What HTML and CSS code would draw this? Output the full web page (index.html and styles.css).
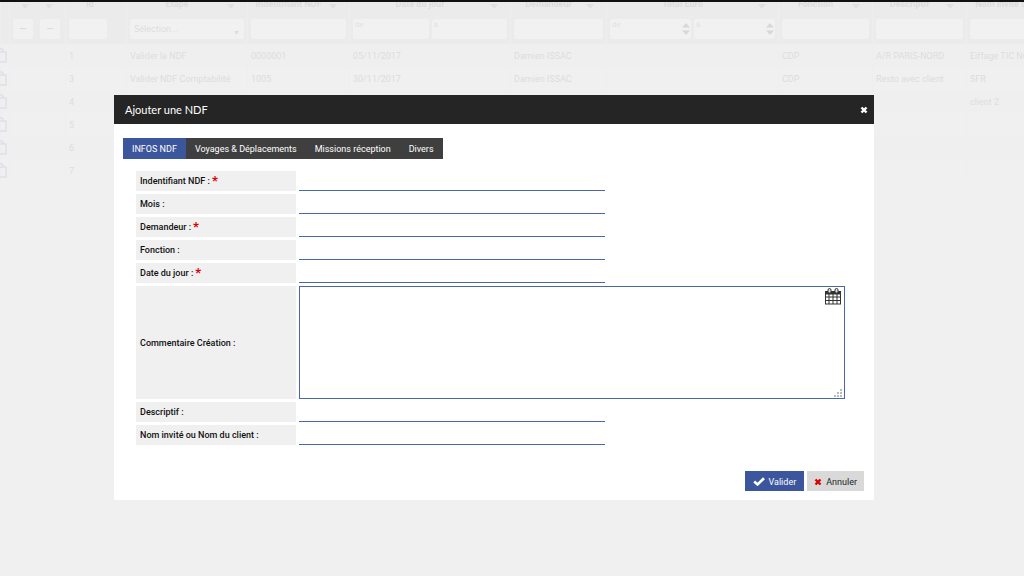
FILE: index.html
```html
<!DOCTYPE html>
<html lang="fr">
<head>
  <meta charset="UTF-8">
  <meta name="viewport" content="width=device-width, initial-scale=1.0">
  <title>Ajouter une NDF</title>
  <link rel="stylesheet" href="styles.css">
</head>
<body>
  <svg class="sprite" aria-hidden="true">
    <symbol id="copy" viewBox="0 0 14 15">
      <path d="M1 4h12v10H1zM3 4V1h6l2 3" fill="none" stroke="currentColor" stroke-width="1.5" />
    </symbol>
    <symbol id="sort" viewBox="0 0 8 6">
      <path d="M0 1h8L4 6z" fill="currentColor" />
    </symbol>
    <symbol id="spin" viewBox="0 0 8 12">
      <path d="M0 4.5L4 0l4 4.5zM0 7.5h8L4 12z" fill="currentColor" />
    </symbol>
    <symbol id="cross" viewBox="0 0 8 8">
      <path d="M1.5 1.5l5 5M6.5 1.5l-5 5" fill="none" stroke="currentColor" stroke-width="2.4" />
    </symbol>
  </svg>

  <div class="topbar"></div>

  <!-- Liste des notes de frais -->
  <main class="page">
    <table class="list">
      <colgroup>
        <col class="col-copy"><col class="col-tools"><col class="col-id"><col class="col-step"><col class="col-ndf"><col class="col-date">
        <col class="col-user"><col class="col-total"><col class="col-job"><col class="col-desc"><col>
      </colgroup>
      <thead>
        <tr class="titles">
          <th></th>
          <th><svg class="sort"><use href="#sort" /></svg><svg class="sort left"><use href="#sort" /></svg></th>
          <th>Id</th>
          <th><svg class="sort"><use href="#sort" /></svg>Étape</th>
          <th><svg class="sort"><use href="#sort" /></svg>Indentifiant NDF</th>
          <th><svg class="sort"><use href="#sort" /></svg>Date du jour</th>
          <th><svg class="sort"><use href="#sort" /></svg>Demandeur</th>
          <th><svg class="sort"><use href="#sort" /></svg>Total Euro</th>
          <th><svg class="sort"><use href="#sort" /></svg>Fonction</th>
          <th><svg class="sort"><use href="#sort" /></svg>Descriptif</th>
          <th>Nom invité ou Nom du client</th>
        </tr>
        <tr class="filters">
          <td></td>
          <td><div class="pair tools"><button type="button" aria-label="Actions">—</button><button type="button" aria-label="Options">—</button></div></td>
          <td><input class="short" type="text" aria-label="Id"></td>
          <td><div class="pick"><select aria-label="Étape"><option>Sélection...</option></select></div></td>
          <td><input type="text" aria-label="Indentifiant NDF"></td>
          <td><div class="pair"><input type="text" placeholder="de" aria-label="Date de"><input type="text" placeholder="à" aria-label="Date à"></div></td>
          <td><input type="text" aria-label="Demandeur"></td>
          <td>
            <div class="pair">
              <div class="number"><input type="text" placeholder="de" aria-label="Total de"><svg><use href="#spin" /></svg></div>
              <div class="number"><input type="text" placeholder="à" aria-label="Total à"><svg><use href="#spin" /></svg></div>
            </div>
          </td>
          <td><input type="text" aria-label="Fonction"></td>
          <td><input type="text" aria-label="Descriptif"></td>
          <td><input type="text" aria-label="Client"></td>
        </tr>
      </thead>
      <tbody>
        <tr><td><svg class="copy"><use href="#copy" /></svg></td><td></td><td>1</td><td>Valider la NDF</td><td>0000001</td><td>05/11/2017</td><td>Damien ISSAC</td><td></td><td>CDP</td><td>A/R PARIS-NORD</td><td>Eiffage TIC NORD</td></tr>
        <tr><td><svg class="copy"><use href="#copy" /></svg></td><td></td><td>3</td><td>Valider NDF Comptabilité</td><td>1005</td><td>30/11/2017</td><td>Damien ISSAC</td><td></td><td>CDP</td><td>Resto avec client</td><td>SFR</td></tr>
        <tr><td><svg class="copy"><use href="#copy" /></svg></td><td></td><td>4</td><td></td><td></td><td></td><td></td><td></td><td></td><td></td><td>client 2</td></tr>
        <tr><td><svg class="copy"><use href="#copy" /></svg></td><td></td><td>5</td><td></td><td></td><td></td><td></td><td></td><td></td><td></td><td></td></tr>
        <tr><td><svg class="copy"><use href="#copy" /></svg></td><td></td><td>6</td><td></td><td></td><td></td><td></td><td></td><td></td><td></td><td></td></tr>
        <tr><td><svg class="copy"><use href="#copy" /></svg></td><td></td><td>7</td><td></td><td></td><td></td><td></td><td></td><td></td><td></td><td></td></tr>
      </tbody>
    </table>
  </main>

  <!-- Fenêtre d'ajout -->
  <div class="overlay">
    <form class="modal" role="dialog" aria-labelledby="modalTitle">
      <header class="modal-header">
        <h1 id="modalTitle">Ajouter une NDF</h1>
        <button class="close" type="button" aria-label="Fermer"><svg><use href="#cross" /></svg></button>
      </header>

      <nav class="tabs">
        <a class="active" href="#infos">INFOS NDF</a>
        <a href="#voyages">Voyages &amp; Déplacements</a>
        <a href="#missions">Missions réception</a>
        <a href="#divers">Divers</a>
      </nav>

      <div class="fields" id="infos">
        <label for="ident">Indentifiant NDF : <b>*</b></label>
        <input type="text" id="ident">
        <label for="mois">Mois :</label>
        <input type="text" id="mois">
        <label for="demandeur">Demandeur : <b>*</b></label>
        <input type="text" id="demandeur">
        <label for="fonction">Fonction :</label>
        <input type="text" id="fonction">
        <label for="date">Date du jour : <b>*</b></label>
        <input type="text" id="date">
        <label for="comment">Commentaire Création :</label>
        <div class="comment">
          <textarea id="comment"></textarea>
          <svg class="calendar" viewBox="0 0 16 17">
            <path d="M0 3h16v13.500H0z" fill="#333" />
            <path d="M1 6.500h2.500v2H1zM4.500 6.500h3v2h-3zM8.500 6.500h3v2h-3zM12.500 6.500H15v2h-2.500zM1 9.500h2.500v2.500H1zM4.500 9.500h3V12h-3zM8.500 9.500h3V12h-3zM12.500 9.500H15V12h-2.500zM1 13h2.500v2.500H1zM4.500 13h3v2.500h-3zM8.500 13h3v2.500h-3zM12.500 13H15v2.500h-2.500z" fill="#fff" />
            <rect x="3" y=".5" width="3" height="4.500" rx="1.500" fill="#ddd" stroke="#333" />
            <rect x="10" y=".5" width="3" height="4.500" rx="1.500" fill="#ddd" stroke="#333" />
          </svg>
          <svg class="grip" viewBox="0 0 9 9">
            <path d="M6 0h2v2H6zM3 3h2v2H3zM6 3h2v2H6zM0 6h2v2H0zM3 6h2v2H3zM6 6h2v2H6z" fill="#bbb" />
          </svg>
        </div>
        <label for="descriptif">Descriptif :</label>
        <input type="text" id="descriptif">
        <label for="client">Nom invité ou Nom du client :</label>
        <input type="text" id="client">
      </div>

      <footer class="actions">
        <button class="submit" type="submit">
          <svg viewBox="0 0 12 9"><path d="M1.200 4.500l3.300 3L11 1.200" fill="none" stroke="currentColor" stroke-width="2.600" /></svg>
          Valider
        </button>
        <button class="cancel" type="button"><svg><use href="#cross" /></svg> Annuler</button>
      </footer>
    </form>
  </div>
</body>
</html>
```
FILE: styles.css
```css
* {
  box-sizing: border-box;
}
body {
  margin: 0;
  min-height: 100vh;
  background: #efefef;
  font-family: Roboto, "Liberation Sans", sans-serif;
  font-size: 9px;
  color: #222;
}
input, select, textarea, button {
  font: inherit;
  color: inherit;
  border: 0;
  margin: 0;
  padding: 0;
  border-radius: 0;
}
.sprite {
  display: none;
}
.topbar {
  position: fixed;
  top: 0;
  left: 0;
  right: 0;
  height: 2px;
  background: #111;
  z-index: 3;
}

/* Liste */
.page {
  overflow: hidden;
}
.list {
  width: 100%;
  min-width: 1110px;
  margin-top: -12px;
  table-layout: fixed;
  border-collapse: collapse;
}
.col-copy { width: 9px; }
.col-tools { width: 56px; }
.col-id { width: 61px; }
.col-step { width: 121px; }
.col-ndf { width: 102px; }
.col-date { width: 161px; }
.col-user { width: 96px; }
.col-total { width: 172px; }
.col-job { width: 94px; }
.col-desc { width: 94px; }
.list th, .list td {
  height: 23px;
  padding: 0 3px;
  text-align: left;
  white-space: nowrap;
  border-left: 1px solid #ddd;
}
.list .titles th {
  height: 25px;
  padding: 0 12px 0 0;
  line-height: 11px;
  text-align: center;
  vertical-align: middle;
  padding-top: 7px;
}
.list .filters td {
  height: 31px;
  padding: 0 3px;
}
.list thead {
  background: #c4c4c4;
}
.list tbody tr:nth-child(odd) {
  background: #e8e8e8;
}
.list td:first-child {
  padding: 0;
}
.sort {
  float: right;
  width: 8px;
  height: 6px;
  margin-top: 4px;
  color: #3c569e;
}
.sort.left {
  margin-right: 16px;
}
.copy {
  display: block;
  width: 14px;
  height: 15px;
  margin-left: -8px;
  color: #3c569e;
}
.filters input, .filters select, .filters button {
  display: block;
  width: 100%;
  height: 20px;
  padding: 0 4px;
  background: #fff;
  border-radius: 3px;
}
.filters .short {
  width: 38px;
}
.filters ::placeholder {
  font-size: 8px;
  color: #555;
}
.filters .pair input {
  padding: 0 2px 9px;
}
.pair {
  display: flex;
  gap: 3px;
}
.pair.tools {
  gap: 7px;
}
.filters .tools button {
  width: 20px;
  font-weight: bold;
}
.pick, .number {
  position: relative;
  flex: 1;
}
.pick select {
  appearance: none;
}
.pick::after {
  content: "▼";
  position: absolute;
  right: 4px;
  bottom: 2px;
  font-size: 7px;
}
.number svg {
  position: absolute;
  top: 4px;
  right: 1px;
  width: 8px;
  height: 12px;
  color: #000;
}

/* Fenêtre */
.overlay {
  position: fixed;
  inset: 0;
  padding: 95px 150px 0 114px;
  background: rgba(239, 239, 239, 0.9);
  z-index: 2;
}
.modal {
  background: #fff;
  padding-bottom: 9px;
}
.modal-header {
  display: flex;
  justify-content: space-between;
  align-items: center;
  height: 29px;
  padding: 0 6px 0 11px;
  background: #252525;
  color: #fff;
}
.modal-header h1 {
  margin: 0;
  font-family: Lato, sans-serif;
  font-size: 11px;
  font-weight: normal;
}
.close {
  background: none;
}
.close svg, .cancel svg {
  display: block;
  width: 8px;
  height: 8px;
}
.tabs {
  display: flex;
  width: fit-content;
  margin: 14px 0 12px 9px;
  background: #3f3f3f;
}
.tabs a {
  padding: 1px 9px 0;
  line-height: 20px;
  color: #fff;
  text-decoration: none;
}
.tabs .active {
  background: #3c569e;
}
.fields {
  display: grid;
  grid-template-columns: 160px 1fr;
  gap: 3px;
  margin: 0 29px 0 22px;
}
.fields label {
  display: flex;
  align-items: center;
  gap: 2px;
  min-height: 20px;
  padding-left: 4px;
  background: #f0f0f0;
  color: #111;
  font-weight: 500;
}
.fields label b {
  color: #d90000;
  font-size: 13px;
  line-height: 16px;
}
.fields input {
  width: 56%;
  border-bottom: 1px solid #4a66ad;
}
.comment {
  position: relative;
  height: 113px;
}
.comment textarea {
  display: block;
  width: 100%;
  height: 100%;
  padding: 4px 24px 4px 4px;
  border: 1px solid #4a66ad;
  resize: none;
}
.calendar {
  position: absolute;
  top: 2px;
  right: 4px;
  width: 16px;
  height: 17px;
}
.grip {
  position: absolute;
  right: 2px;
  bottom: 1px;
  width: 9px;
  height: 9px;
}
.actions {
  display: flex;
  justify-content: flex-end;
  gap: 3px;
  margin: 26px 10px 0 0;
}
.actions button {
  display: flex;
  align-items: center;
  gap: 4px;
  height: 20px;
  padding: 1px 7px 0;
}
.actions .submit {
  padding: 1px 8px 0;
  background: #3c569e;
  color: #fff;
}
.submit svg {
  width: 12px;
  height: 9px;
}
.cancel {
  background: #d9d9d9;
}
.cancel svg {
  color: #d90000;
}
```
